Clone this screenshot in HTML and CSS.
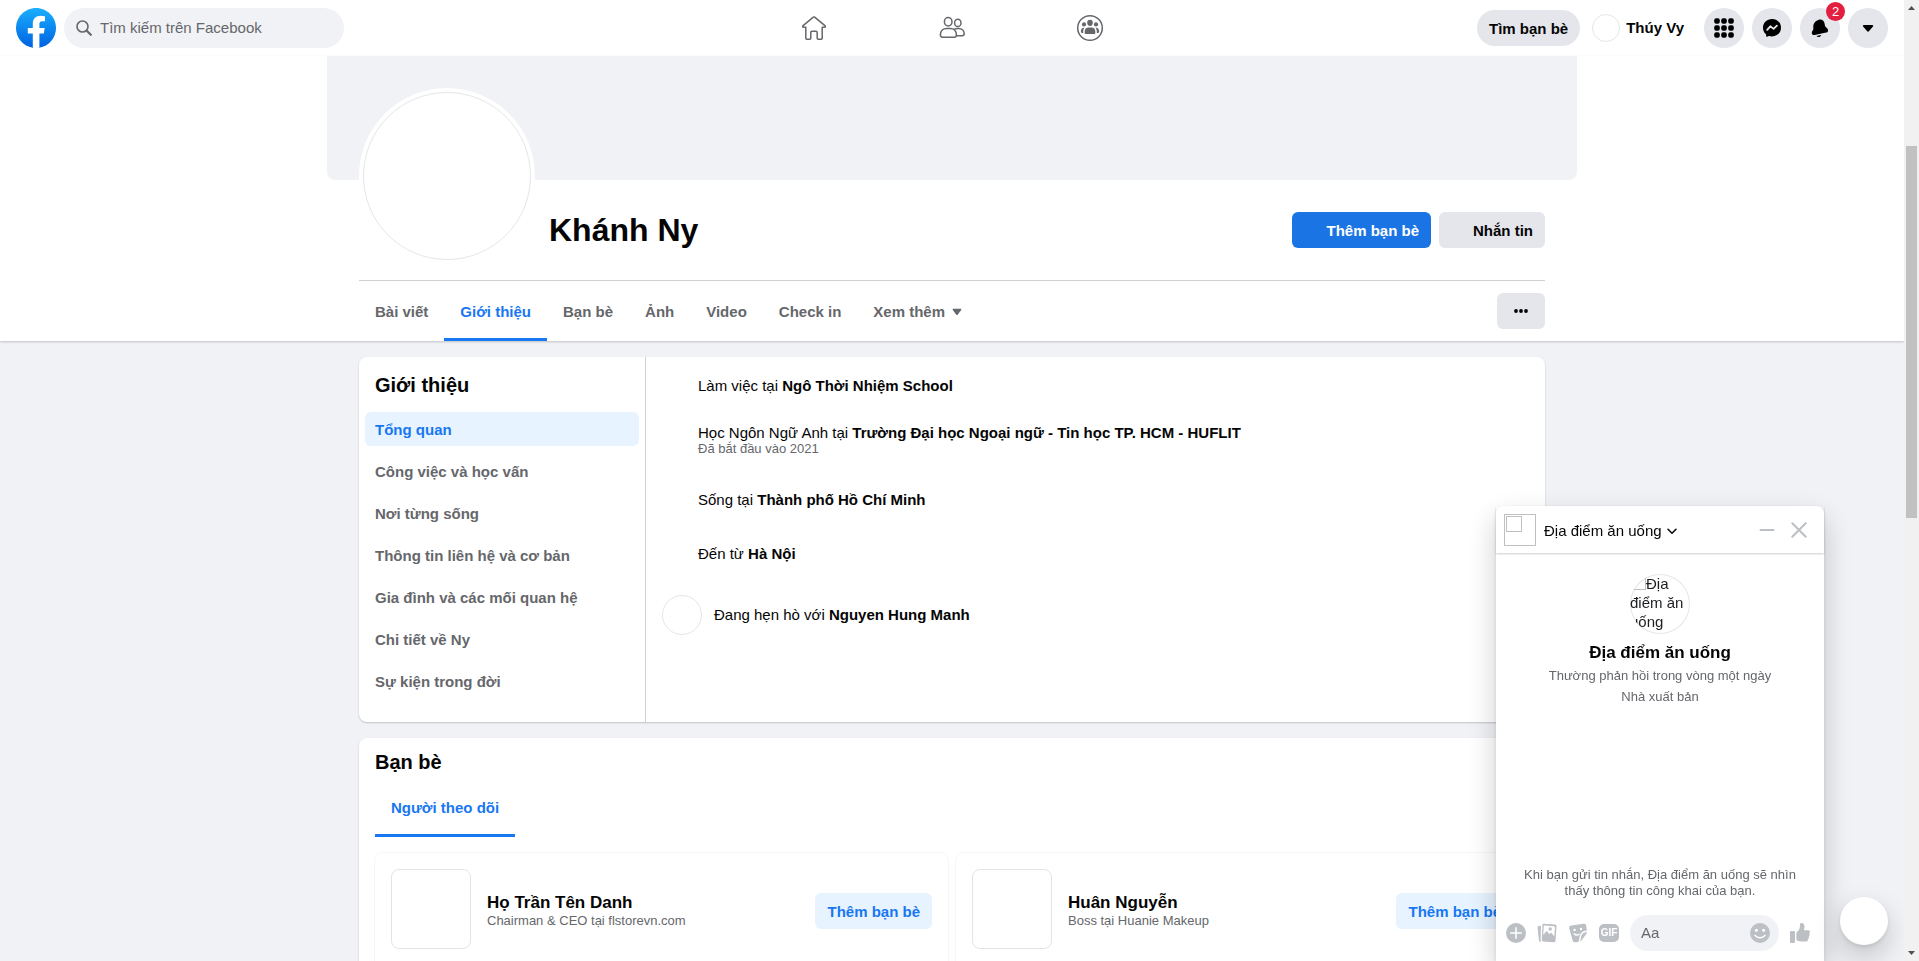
FILE: index.html
```html
<!DOCTYPE html>
<html lang="vi">
<head>
<meta charset="utf-8">
<title>Khánh Ny | Facebook</title>
<link rel="stylesheet" href="styles.css">
</head>
<body>
<div class="page">
  <header class="topbar">
    <div class="topbar-start">
      <a class="logo" href="#" aria-label="Facebook">
        <svg viewBox="0 0 40 40" width="40" height="40">
          <defs><linearGradient id="fb" x1="0" y1="0" x2="0" y2="1"><stop offset="0" stop-color="#19afff"/><stop offset="1" stop-color="#0062e0"/></linearGradient></defs>
          <path fill="url(#fb)" d="M16.7 39.8C7.2 38.1 0 29.9 0 20 0 9 9 0 20 0s20 9 20 20c0 9.9-7.2 18.1-16.7 19.8z"/>
          <path fill="#fff" d="M27.8 25.6l.9-5.6h-5.3v-3.9c0-1.6.6-2.8 3-2.8h2.6V8.2c-1.4-.2-3-.4-4.400-.4-4.600 0-7.800 2.800-7.800 7.800V20h-5v5.600h5v14.100c1.100.2 2.200.3 3.300.3s2.200-.1 3.300-.3V25.600z"/>
        </svg>
      </a>
      <label class="search">
        <svg viewBox="0 0 16 16" width="16" height="16" fill="none" stroke="#65676b" stroke-linecap="round"><circle cx="6.500" cy="6.500" r="5.500" stroke-width="1.600"/><path stroke-width="2.200" d="M11 11l3.800 3.800"/></svg>
        <input type="search" placeholder="Tìm kiếm trên Facebook" aria-label="Tìm kiếm trên Facebook">
      </label>
    </div>
    <nav class="topnav" aria-label="Chính">
      <a href="#" aria-label="Trang chủ"><svg viewBox="0 0 24 24" width="24" height="24" fill="none" stroke="#65676b" stroke-width="1.500" stroke-linejoin="round"><path d="M11.300 1.200L.8 9.900c-.5.500-.2 1.300.5 1.300h2.500v11.100c0 .6.300.9.900.9h3.200c.6 0 .9-.3.900-.9v-5.800c0-.8.400-1.200 1.200-1.200h4c.8 0 1.200.4 1.200 1.200v5.800c0 .6.300.9.900.9h3.200c.6 0 .9-.3.900-.9V11.200h2.500c.7 0 1-.8.500-1.300L12.700 1.200c-.5-.4-.9-.4-1.400 0z"/></svg></a>
      <a href="#" aria-label="Bạn bè"><svg viewBox="0 0 28 28" width="28" height="28" fill="none" stroke="#65676b" stroke-width="1.500" stroke-linejoin="round"><ellipse cx="10.200" cy="7.700" rx="3.800" ry="4.200"/><ellipse cx="19.800" cy="8.900" rx="3.200" ry="3.600"/><path d="M2.400 20.800c0-4.200 2.900-6.400 6.200-6.400h3.600c3.300 0 6.200 2.200 6.200 6.400 0 1.500-.6 2.400-2 2.400h-12c-1.400 0-2-.9-2-2.400z"/><path d="M16.300 15.400c1-.8 2-1 3.100-1h1.300c3 0 5.500 2 5.500 5.400 0 1.200-.6 1.900-1.700 1.900h-6"/></svg></a>
      <a href="#" aria-label="Nhóm"><svg viewBox="0 0 28 28" width="28" height="28" fill="#65676b"><circle cx="14" cy="14" r="12.300" fill="none" stroke="#65676b" stroke-width="1.500"/><ellipse cx="14" cy="8.800" rx="2.800" ry="3.100"/><circle cx="8" cy="10.400" r="2.100"/><circle cx="20" cy="10.400" r="2.100"/><path d="M8.700 17.500c0-2.400 1.600-3.900 3.700-3.900h3.200c2.100 0 3.700 1.500 3.700 3.900v1.400c0 .7-.4 1.100-1.100 1.100H9.800c-.7 0-1.100-.4-1.100-1.100zM8.400 13.900c-.9 1-1.200 2.200-1.200 3.600v1.400H6c-.7 0-1.100-.4-1.100-1.100v-.6c0-2 1.300-3.600 3.500-3.300zM19.600 13.900c.9 1 1.200 2.200 1.200 3.600v1.400H22c.7 0 1.100-.4 1.100-1.100v-.6c0-2-1.300-3.600-3.500-3.300z"/></svg></a>
    </nav>
    <div class="topbar-end">
      <a class="find-friends" href="#">Tìm bạn bè</a>
      <a class="me" href="#"><span class="me-photo"></span>Thúy Vy</a>
      <button class="round" type="button" aria-label="Menu"><svg viewBox="0 0 20 20" width="20" height="20"><rect x=".2" y=".2" width="5.600" height="5.600" rx="2"/><rect x="7.200" y=".2" width="5.600" height="5.600" rx="2"/><rect x="14.200" y=".2" width="5.600" height="5.600" rx="2"/><rect x=".2" y="7.200" width="5.600" height="5.600" rx="2"/><rect x="7.200" y="7.200" width="5.600" height="5.600" rx="2"/><rect x="14.200" y="7.200" width="5.600" height="5.600" rx="2"/><rect x=".2" y="14.200" width="5.600" height="5.600" rx="2"/><rect x="7.200" y="14.200" width="5.600" height="5.600" rx="2"/><rect x="14.200" y="14.200" width="5.600" height="5.600" rx="2"/></svg></button>
      <button class="round" type="button" aria-label="Messenger"><svg viewBox="0 0 20 20" width="20" height="20"><path d="M10 1C4.900 1 1 4.700 1 9.700c0 2.600 1.100 4.900 2.800 6.400.2.200.3.500.3.700v1.300c0 .5.500.9 1 .7l1.600-.8c.2-.1.300-.1.500 0 .9.300 1.800.4 2.800.4 5.100 0 9-3.700 9-8.700S15.100 1 10 1z"/><path fill="none" stroke="#e4e6eb" stroke-width="1.800" stroke-linecap="round" stroke-linejoin="round" d="M5.200 11.900l3.100-3.600 3.300 2.600 3.300-3.200"/></svg></button>
      <button class="round" type="button" aria-label="Thông báo, 2 mới"><svg viewBox="0 0 20 20" width="20" height="20"><path d="M8.300 1.900C11.500.6 14.400 2.600 14.700 6c.1 1.700.5 2.700 1.500 3.500 1 .7 1.900 1.700 1.900 2.900 0 1.100-.8 1.900-1.900 2.200l-11.500 2.300c-1.600.3-2.900-.5-2.900-2 0-.9.400-1.500.9-2.300.6-.9.700-1.800.6-3.400C3.100 5.700 5.200 3 8.300 1.900z"/><path d="M6.500 17.900l4.700-.9c-.3 1.100-1 1.700-2 1.900-1.100.200-2-.1-2.700-1z"/></svg><span class="badge">2</span></button>
      <button class="round" type="button" aria-label="Tài khoản"><svg viewBox="0 0 20 20" width="20" height="20"><path d="M5.800 7h8.500c.8 0 1.200.8.700 1.400l-3.900 4.700c-.6.700-1.500.7-2.100 0L5.100 8.400C4.600 7.800 5 7 5.800 7z"/></svg></button>
    </div>
  </header>

  <section class="profile">
    <div class="cover"></div>
    <div class="wrap">
      <div class="identity">
        <div class="ring"><div class="photo"></div></div>
        <h1>Khánh Ny</h1>
        <div class="actions">
          <button class="btn primary" type="button"><span class="icon-space"></span>Thêm bạn bè</button>
          <button class="btn" type="button"><span class="icon-space"></span>Nhắn tin</button>
        </div>
      </div>
      <div class="tabs-row">
        <nav class="tabs" aria-label="Trang cá nhân">
          <a href="#">Bài viết</a>
          <a href="#" class="current" aria-current="page">Giới thiệu</a>
          <a href="#">Bạn bè</a>
          <a href="#">Ảnh</a>
          <a href="#">Video</a>
          <a href="#">Check in</a>
          <a href="#">Xem thêm <svg viewBox="0 0 10 8" width="10" height="8"><path fill="#65676b" d="M1.500.8h7c.8 0 1.100.7.700 1.200L5.800 6.500c-.5.700-1.200.7-1.700 0L.8 2C.4 1.500.7.8 1.500.8z"/></svg></a>
        </nav>
        <button class="btn more" type="button" aria-label="Xem thêm lựa chọn"><svg viewBox="0 0 16 4" width="16" height="4"><circle cx="3" cy="2" r="1.900"/><circle cx="8" cy="2" r="1.900"/><circle cx="13" cy="2" r="1.900"/></svg></button>
      </div>
    </div>
  </section>

  <main class="wrap content">
    <section class="card about">
      <nav class="about-nav" aria-label="Giới thiệu">
        <h2>Giới thiệu</h2>
        <a href="#" class="current" aria-current="page">Tổng quan</a>
        <a href="#">Công việc và học vấn</a>
        <a href="#">Nơi từng sống</a>
        <a href="#">Thông tin liên hệ và cơ bản</a>
        <a href="#">Gia đình và các mối quan hệ</a>
        <a href="#">Chi tiết về Ny</a>
        <a href="#">Sự kiện trong đời</a>
      </nav>
      <div class="facts">
        <div class="fact"><span class="fact-icon"></span><p>Làm việc tại <b>Ngô Thời Nhiệm School</b></p></div>
        <div class="fact study"><span class="fact-icon"></span><p>Học Ngôn Ngữ Anh tại <b>Trường Đại học Ngoại ngữ - Tin học TP. HCM - HUFLIT</b><small>Đã bắt đầu vào 2021</small></p></div>
        <div class="fact place"><span class="fact-icon"></span><p>Sống tại <b>Thành phố Hồ Chí Minh</b></p></div>
        <div class="fact origin"><span class="fact-icon"></span><p>Đến từ <b>Hà Nội</b></p></div>
        <div class="fact partner"><span class="partner-photo"></span><p>Đang hẹn hò với <b>Nguyen Hung Manh</b></p></div>
      </div>
    </section>

    <section class="card friends">
      <h2>Bạn bè</h2>
      <nav class="friend-tabs" aria-label="Bạn bè"><a href="#">Người theo dõi</a></nav>
      <div class="friend-grid">
        <article class="friend"><span class="thumb"></span><div class="who"><h3>Họ Trần Tên Danh</h3><p>Chairman &amp; CEO tại flstorevn.com</p></div><button class="btn soft" type="button">Thêm bạn bè</button></article>
        <article class="friend"><span class="thumb"></span><div class="who"><h3>Huân Nguyễn</h3><p>Boss tại Huanie Makeup</p></div><button class="btn soft" type="button">Thêm bạn bè</button></article>
      </div>
    </section>
  </main>
</div>

<section class="chat" aria-label="Địa điểm ăn uống">
  <header class="chat-head">
    <span class="missing"><i></i></span>
    <button class="chat-name" type="button">Địa điểm ăn uống <svg viewBox="0 0 10 10" width="10" height="10" fill="none" stroke="#050505" stroke-width="1.500" stroke-linecap="round" stroke-linejoin="round"><path d="M1 3.200l4 4 4-4"/></svg></button>
    <button class="plain" type="button" aria-label="Thu nhỏ"><svg viewBox="0 0 16 16" width="16" height="16" stroke="#bcc0c4" stroke-width="2" stroke-linecap="round"><path d="M1.500 8h13"/></svg></button>
    <button class="plain" type="button" aria-label="Đóng"><svg viewBox="0 0 16 16" width="16" height="16" stroke="#bcc0c4" stroke-width="2" stroke-linecap="round"><path d="M1.300 1.300l13.400 13.400M14.700 1.300L1.300 14.700"/></svg></button>
  </header>
  <div class="chat-body">
    <div class="chat-photo"><i></i>Địa điểm ăn uống</div>
    <h4>Địa điểm ăn uống</h4>
    <p>Thường phản hồi trong vòng một ngày</p>
    <p>Nhà xuất bản</p>
    <p class="notice">Khi bạn gửi tin nhắn, Địa điểm ăn uống sẽ nhìn thấy thông tin công khai của bạn.</p>
  </div>
  <form class="composer">
    <button class="plain" type="button" aria-label="Thêm"><svg viewBox="0 0 20 20" width="20" height="20"><circle cx="10" cy="10" r="10" fill="#bcc0c4"/><path stroke="#fff" stroke-width="1.500" stroke-linecap="round" d="M10 4.800v10.400M4.800 10h10.400"/></svg></button>
    <button class="plain" type="button" aria-label="Ảnh"><svg viewBox="0 0 20 20" width="20" height="20"><path fill="#bcc0c4" d="M7 .8l11 .8c1 .1 1.600.8 1.500 1.700l-1 14.500c-.1 1-.8 1.600-1.700 1.500L6.300 18.500c-1-.1-1.500-.8-1.500-1.700l.6-14.500C5.400 1.300 6 .7 7 .8zM3.900 2.700l-.3 14.800c0 .7.200 1.100.5 1.500l-.7-.1c-.9-.1-1.400-.7-1.500-1.600L.6 4.600c-.1-1 .4-1.600 1.400-1.700z"/><path fill="#fff" d="M6.700 3.800c0-.9.500-1.300 1.300-1.200l8.800.6c.8.100 1.200.6 1.100 1.400l-.6 8.800-2.500-3.200c-.4-.5-.9-.5-1.300-.1l-1.200 1.100-1.900-2.700c-.4-.5-.9-.5-1.300 0L6.200 12z"/><circle cx="13.200" cy="6" r="1.700" fill="#bcc0c4"/></svg></button>
    <button class="plain" type="button" aria-label="Nhãn dán"><svg viewBox="0 0 20 20" width="20" height="20"><path fill="#bcc0c4" d="M3.300 2.400L15.700.8c1.400-.2 2.300.5 2.500 1.900l.7 4.800c-4.700.3-7 3-7.400 7.300-.1 1.500-.6 2.900-1.200 4.300l-3.200.1c-1.400.2-2.300-.5-2.500-1.900L1.200 5.300c-.2-1.600.5-2.700 2.100-2.900zM19 9c-.1 1-.5 1.700-1.100 2.500l-4 5.500c-.6.800-1.300 1.500-2.200 1.900.8-1.400 1.200-2.700 1.300-4.200.3-3.500 2.300-5.500 6-5.700z"/><circle cx="6.600" cy="6.900" r="1.200" fill="#fff"/><circle cx="13" cy="6" r="1.200" fill="#fff"/><path fill="none" stroke="#fff" stroke-width="1.400" stroke-linecap="round" d="M6.200 10.700c1.200 1.500 3.200 1.700 4.900.5"/></svg></button>
    <button class="plain gif" type="button" aria-label="GIF"><span>GIF</span></button>
    <label class="message"><input type="text" placeholder="Aa" aria-label="Tin nhắn"><svg viewBox="0 0 20 20" width="20" height="20"><circle cx="10" cy="10" r="10" fill="#bcc0c4"/><circle cx="6.400" cy="7.300" r="1.500" fill="#fff"/><circle cx="13.600" cy="7.300" r="1.500" fill="#fff"/><path d="M5 12.400c2.300 3 7.700 3 10 0" fill="none" stroke="#fff" stroke-width="1.500" stroke-linecap="round"/></svg></label>
    <button class="plain" type="button" aria-label="Thích"><svg viewBox="0 0 20 20" width="20" height="20" fill="#bcc0c4"><rect y="8" width="5" height="12" rx="1.200"/><path d="M6.400 10.200c0-.9.400-1.300 1-1.800 1.700-1.300 2.300-2.700 2.500-4.900L10 1.400C10.100.5 10.600 0 11.500 0c2.200 0 3 1.700 3 3.900 0 1.300-.3 2.300-.7 3.300h4.300c1.200 0 1.900.8 1.900 1.800 0 .7-.3 1.100-.8 1.400.3.400.5.800.5 1.300 0 .8-.4 1.300-1 1.600.2.400.3.700.3 1.100 0 .8-.5 1.300-1.100 1.500.4 1.500-.5 2.600-2.100 2.600h-4.300c-1.600 0-2.800-.2-4-.8-.7-.3-1.100-.8-1.100-1.500z"/></svg></button>
  </form>
</section>

<button class="compose" type="button" aria-label="Tin nhắn mới"></button>

<div class="scrollbar" aria-hidden="true">
  <svg viewBox="0 0 7 4" width="7" height="4"><path fill="#505050" d="M0 4l3.500-4L7 4z"/></svg>
  <div class="track"><div class="scroll-thumb"></div></div>
  <svg viewBox="0 0 7 4" width="7" height="4"><path fill="#505050" d="M0 0l3.500 4L7 0z"/></svg>
</div>
</body>
</html>
```
FILE: styles.css
```css
* { box-sizing: border-box; }
body {
  margin: 0;
  height: 100vh;
  overflow: hidden;
  background: #f0f2f5;
  color: #050505;
  font: 15px/20px "Liberation Sans", Arial, sans-serif;
}
h1, h2, h3, h4, p { margin: 0; }
a { color: inherit; text-decoration: none; }
button { border: 0; padding: 0; background: none; color: inherit; font: inherit; }
svg { display: block; flex: none; }
.page { margin-right: 15px; }

/* Top bar */
.topbar {
  display: grid;
  grid-template-columns: 1fr auto 1fr;
  align-items: center;
  height: 56px;
  padding: 0 16px;
  background: #fff;
}
.topbar-start, .topbar-end { display: flex; align-items: center; gap: 8px; }
.topbar-end { justify-content: flex-end; }
.search {
  display: flex;
  align-items: center;
  gap: 8px;
  width: 280px;
  height: 40px;
  padding: 0 12px;
  border-radius: 20px;
  background: #f0f2f5;
}
.search input, .message input {
  flex: 1;
  width: 100%;
  min-width: 0;
  padding: 0;
  border: 0;
  outline: 0;
  background: none;
  color: #050505;
  font: inherit;
}
input::placeholder { color: #65676b; opacity: 1; }
.topnav { display: flex; gap: 8px; }
.topnav a { display: flex; justify-content: center; align-items: center; width: 130px; height: 56px; }
.find-friends {
  padding: 9px 12px 7px;
  border-radius: 18px;
  background: #e4e6eb;
  font-weight: bold;
}
.me {
  display: flex;
  align-items: center;
  gap: 6px;
  padding: 0 12px 0 4px;
  font-weight: bold;
  line-height: 22px;
}
.me-photo { width: 28px; height: 28px; border: 1px solid #e6e6e6; border-radius: 50%; }
.round {
  position: relative;
  display: flex;
  justify-content: center;
  align-items: center;
  width: 40px;
  height: 40px;
  border-radius: 50%;
  background: #e4e6eb;
}
.badge {
  position: absolute;
  top: -6px;
  right: -5px;
  width: 19px;
  height: 19px;
  border-radius: 50%;
  background: #e41e3f;
  color: #fff;
  font-size: 13px;
  line-height: 19px;
  text-align: center;
}

/* Profile header */
.profile { background: #fff; box-shadow: 0 1px 2px rgba(0, 0, 0, .2); }
.cover {
  max-width: 1250px;
  height: 124px;
  margin: 0 auto;
  border-radius: 0 0 8px 8px;
  background: #f0f2f5;
}
.wrap { max-width: 1186px; margin: 0 auto; }
.identity {
  display: flex;
  align-items: center;
  height: 101px;
  border-bottom: 1px solid #ced0d4;
}
.ring {
  position: relative;
  align-self: flex-end;
  margin: 0 14px 16px 0;
  padding: 4px;
  border-radius: 50%;
  background: #fff;
}
.photo { width: 168px; height: 168px; border: 1px solid #e6e6e6; border-radius: 50%; }
h1 { flex: 1; font-size: 32px; line-height: 38px; }
.actions { display: flex; gap: 8px; }
.btn {
  display: flex;
  justify-content: center;
  align-items: center;
  gap: 6px;
  height: 36px;
  padding: 2px 12px 0;
  border-radius: 6px;
  background: #e4e6eb;
  font-weight: bold;
}
.primary { background: #1b74e4; color: #fff; }
.soft { background: #e7f3ff; color: #1877f2; }
.icon-space { width: 16px; }
.tabs-row { display: flex; justify-content: space-between; align-items: center; height: 60px; }
.tabs { display: flex; align-self: stretch; }
.tabs a {
  display: flex;
  align-items: center;
  gap: 7px;
  padding: 4px 16px 0;
  border-bottom: 3px solid transparent;
  color: #65676b;
  font-weight: bold;
}
.tabs .current { border-color: #1877f2; color: #1877f2; }
.more { width: 48px; padding-top: 0; }

/* Cards */
.content { padding-top: 16px; }
.card { border-radius: 8px; background: #fff; box-shadow: 0 1px 2px rgba(0, 0, 0, .2); }
h2 { font-size: 20px; line-height: 24px; }
.about { display: flex; margin-bottom: 16px; }
.about-nav {
  display: flex;
  flex-direction: column;
  gap: 8px;
  width: 287px;
  padding: 16px 6px 24px;
  border-right: 1px solid #ced0d4;
}
.about-nav h2 { padding: 0 10px; margin-bottom: 7px; }
.about-nav a { padding: 8px 10px 6px; border-radius: 6px; color: #65676b; font-weight: bold; }
.about-nav .current { background: #e7f3ff; color: #1877f2; }
.facts { display: flex; flex-direction: column; padding: 19px 16px; }
.fact { display: flex; gap: 12px; min-height: 47px; }
.fact-icon { width: 24px; }
.fact small { display: block; color: #65676b; font-size: 13px; line-height: 12px; }
.study { min-height: 67px; }
.place { min-height: 54px; }
.origin { min-height: 51px; }
.partner { align-items: center; min-height: 40px; }
.partner p { line-height: 22px; }
.partner-photo { width: 40px; height: 40px; border: 1px solid #e6e6e6; border-radius: 50%; }
.fact.partner { min-height: 40px; }

.friends { padding: 12px 16px 16px; }
.friend-tabs { display: flex; margin: 3px 0 16px; }
.friend-tabs a {
  padding: 21px 16px 16px;
  border-bottom: 3px solid #1877f2;
  color: #1877f2;
  font-weight: bold;
}
.friend-grid { display: grid; grid-template-columns: 1fr 1fr; gap: 8px; }
.friend {
  display: flex;
  align-items: center;
  gap: 16px;
  padding: 16px;
  border-radius: 8px;
  box-shadow: 0 0 0 1px #f5f6f8;
}
.thumb { width: 80px; height: 80px; margin-bottom: 4px; border: 1px solid #e4e4e4; border-radius: 8px; }
.who { flex: 1; }
h3, h4 { font-size: 17px; line-height: 20px; }
.who p { color: #65676b; font-size: 13px; line-height: 16px; }

/* Chat window */
.chat {
  position: fixed;
  right: 95px;
  bottom: 0;
  display: flex;
  flex-direction: column;
  width: 328px;
  height: 455px;
  border-radius: 8px 8px 0 0;
  background: #fff;
  box-shadow: 0 12px 28px rgba(0, 0, 0, .2), 0 2px 4px rgba(0, 0, 0, .1);
}
.chat-head {
  display: flex;
  align-items: center;
  gap: 8px;
  height: 47px;
  padding: 1px 13px 0 8px;
  box-shadow: 0 1px 2px rgba(0, 0, 0, .2);
}
.missing { width: 32px; height: 32px; padding: 1px; border: 1px solid #c0c0c0; }
.missing i { display: block; width: 16px; height: 16px; border: 1px solid #c0c0c0; }
.chat-name { display: flex; align-items: center; gap: 5px; margin-right: auto; padding-top: 1px; }
.plain { display: flex; flex: none; justify-content: center; align-items: center; width: 24px; height: 24px; }
.chat-body {
  flex: 1;
  display: flex;
  flex-direction: column;
  align-items: center;
  padding: 21px 24px 0;
  color: #65676b;
  font-size: 13px;
  line-height: 21px;
  text-align: center;
}
.chat-photo {
  width: 60px;
  height: 60px;
  margin-bottom: 9px;
  overflow: hidden;
  border-radius: 50%;
  box-shadow: inset 0 0 0 1px #e6e6e6;
  color: #1c1e21;
  font-size: 15px;
  line-height: 19px;
  text-align: left;
}
.chat-photo i { float: left; width: 16px; height: 16px; border: 1px solid #c0c0c0; }
.chat-body h4 { margin-bottom: 2px; color: #050505; }
.chat-body .notice { margin: auto 0 16px; line-height: 16px; }
.composer { display: flex; align-items: center; gap: 7px; padding: 0 12px 10px 8px; }
.gif span {
  width: 20px;
  height: 18px;
  border-radius: 5px;
  background: #bcc0c4;
  color: #fff;
  font-size: 10px;
  font-weight: bold;
  line-height: 18px;
}
.message {
  flex: 1;
  display: flex;
  align-items: center;
  min-width: 0;
  height: 36px;
  margin: 0 2px;
  padding: 0 9px 0 11px;
  border-radius: 18px;
  background: #f0f2f5;
}
.compose {
  position: fixed;
  right: 31px;
  bottom: 16px;
  width: 48px;
  height: 48px;
  border-radius: 50%;
  background: #fff;
  box-shadow: 0 12px 28px rgba(0, 0, 0, .2), 0 2px 4px rgba(0, 0, 0, .1);
}

/* Scroll bar */
.scrollbar {
  position: fixed;
  top: 0;
  right: 0;
  bottom: 0;
  display: flex;
  flex-direction: column;
  align-items: center;
  width: 15px;
  padding: 6px 2px;
  background: #f1f1f1;
}
.track { flex: 1; width: 100%; padding-top: 136px; }
.scroll-thumb { height: 372px; background: #c1c1c1; }
```
